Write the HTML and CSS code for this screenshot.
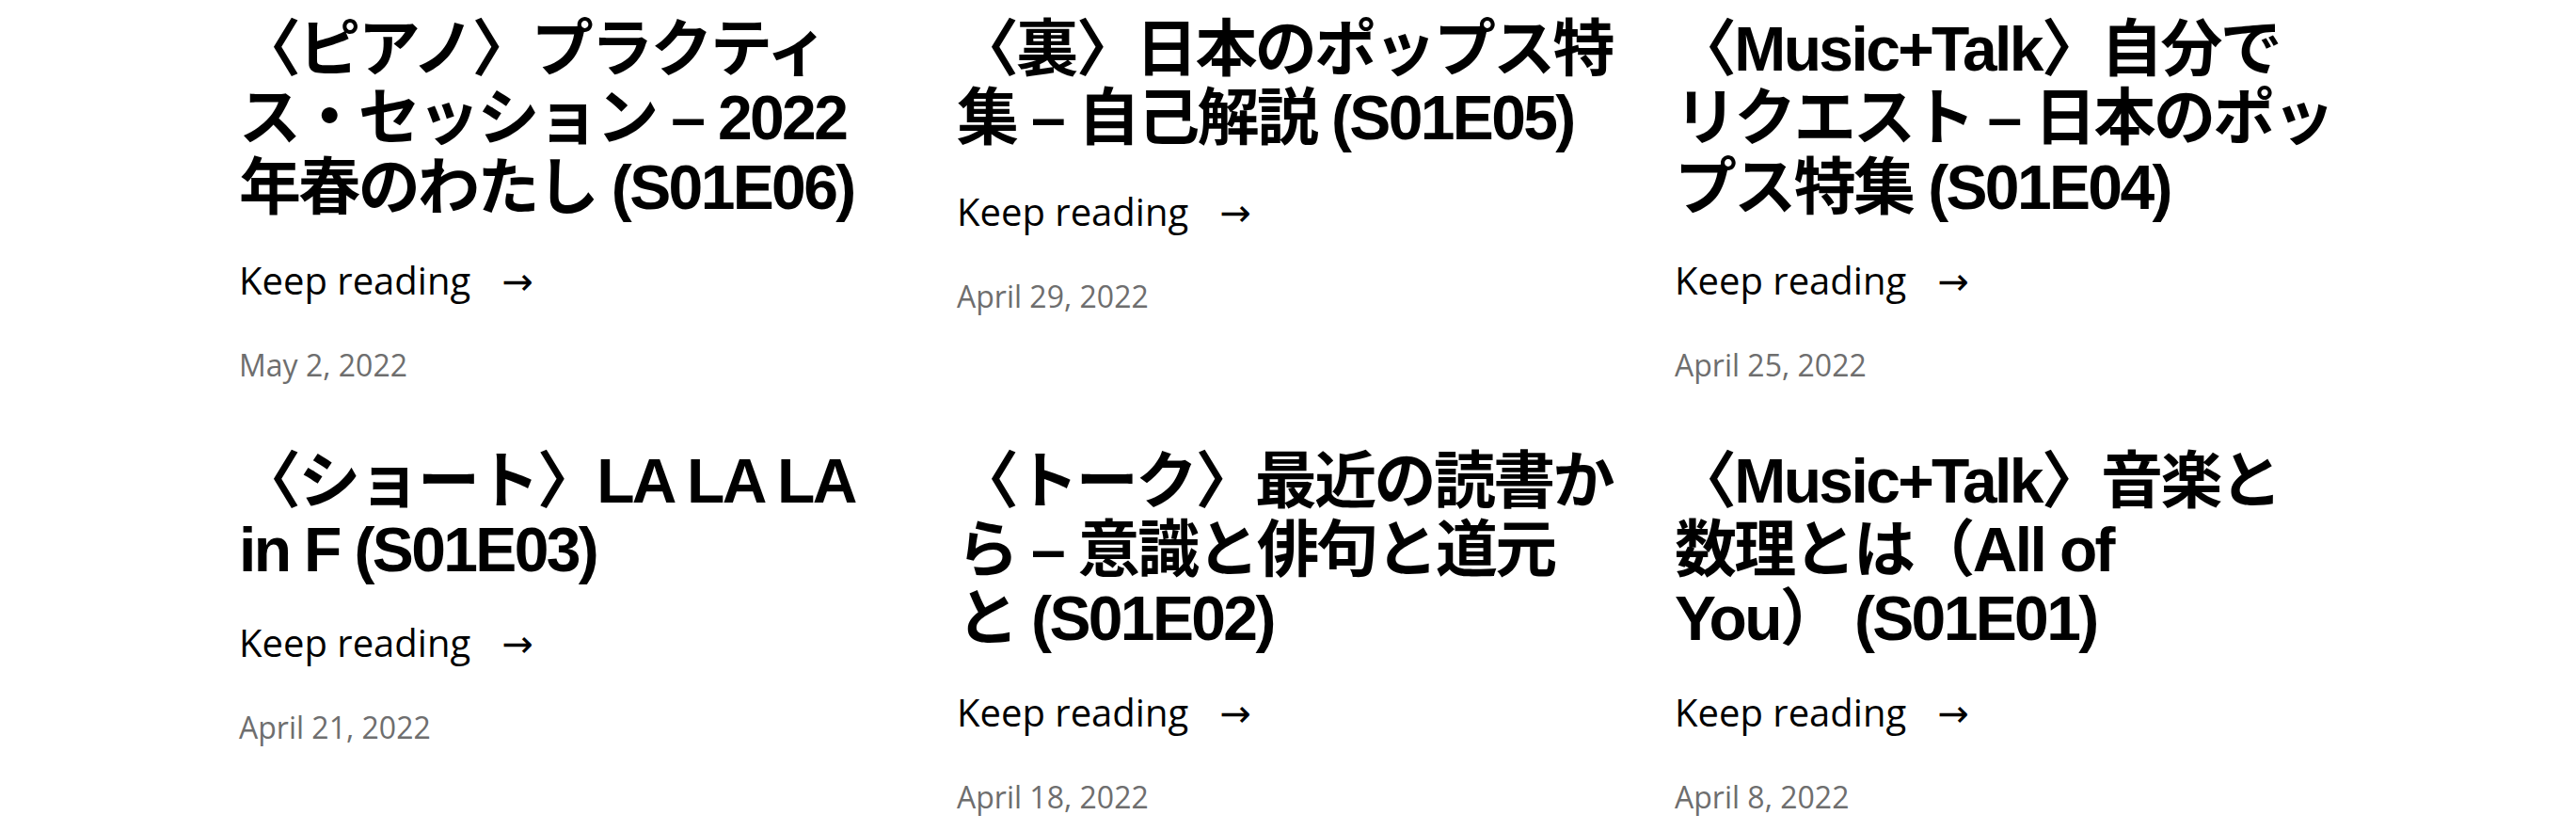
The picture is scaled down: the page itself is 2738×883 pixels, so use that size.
FILE: index.html
```html
<!DOCTYPE html>
<html lang="ja">
<head>
<meta charset="utf-8">
<title>Episodes</title>
<link rel="stylesheet" href="styles.css">
</head>
<body>
<main class="posts">
  <article class="post">
    <h2 class="post-title">〈ピアノ〉プラクティス・セッション – 2022年春のわたし&nbsp;(S01E06)</h2>
    <a class="more" href="#">Keep reading <span class="arrow">→</span></a>
    <time class="date">May 2, 2022</time>
  </article>
  <article class="post">
    <h2 class="post-title">〈裏〉日本のポップス特集 – 自己解説&nbsp;(S01E05)</h2>
    <a class="more" href="#">Keep reading <span class="arrow">→</span></a>
    <time class="date">April 29, 2022</time>
  </article>
  <article class="post">
    <h2 class="post-title">〈Music+Talk〉自分でリクエスト – 日本のポップス特集&nbsp;(S01E04)</h2>
    <a class="more" href="#">Keep reading <span class="arrow">→</span></a>
    <time class="date">April 25, 2022</time>
  </article>
  <article class="post">
    <h2 class="post-title">〈ショート〉LA LA LA in F&nbsp;(S01E03)</h2>
    <a class="more" href="#">Keep reading <span class="arrow">→</span></a>
    <time class="date">April 21, 2022</time>
  </article>
  <article class="post">
    <h2 class="post-title">〈トーク〉最近の読書から – 意識と俳句と道元と&nbsp;(S01E02)</h2>
    <a class="more" href="#">Keep reading <span class="arrow">→</span></a>
    <time class="date">April 18, 2022</time>
  </article>
  <article class="post">
    <h2 class="post-title">〈Music+Talk〉音楽と数理とは（All of You）&nbsp;(S01E01)</h2>
    <a class="more" href="#">Keep reading <span class="arrow">→</span></a>
    <time class="date">April 8, 2022</time>
  </article>
</main>
</body>
</html>
```

FILE: styles.css
```css
html, body {
  margin: 0;
  padding: 0;
  background: #ffffff;
}

body {
  font-family: "Open Sans", "Noto Sans CJK JP", sans-serif;
  color: #000000;
}

.posts {
  max-width: 2230px;
  margin: 0 auto;
  padding-top: 16px;
  display: grid;
  grid-template-columns: repeat(3, 704px);
  column-gap: 59px;
  row-gap: 63px;
}

.post {
  display: flex;
  flex-direction: column;
  align-items: flex-start;
}

.post-title {
  margin: 0;
  font-family: "Liberation Sans", "Noto Sans CJK JP", sans-serif;
  font-weight: 700;
  font-size: 66px;
  line-height: 1.11;
  letter-spacing: -0.04em;
  color: #000000;
}

.more {
  margin-top: 32px;
  font-size: 40px;
  line-height: 60px;
  color: #000000;
  text-decoration: none;
}

.arrow {
  font-family: "DejaVu Sans", sans-serif;
  margin-left: 23px;
}

.date {
  margin-top: 35px;
  font-size: 32px;
  line-height: 48px;
  color: #6e6e6e;
}
```
